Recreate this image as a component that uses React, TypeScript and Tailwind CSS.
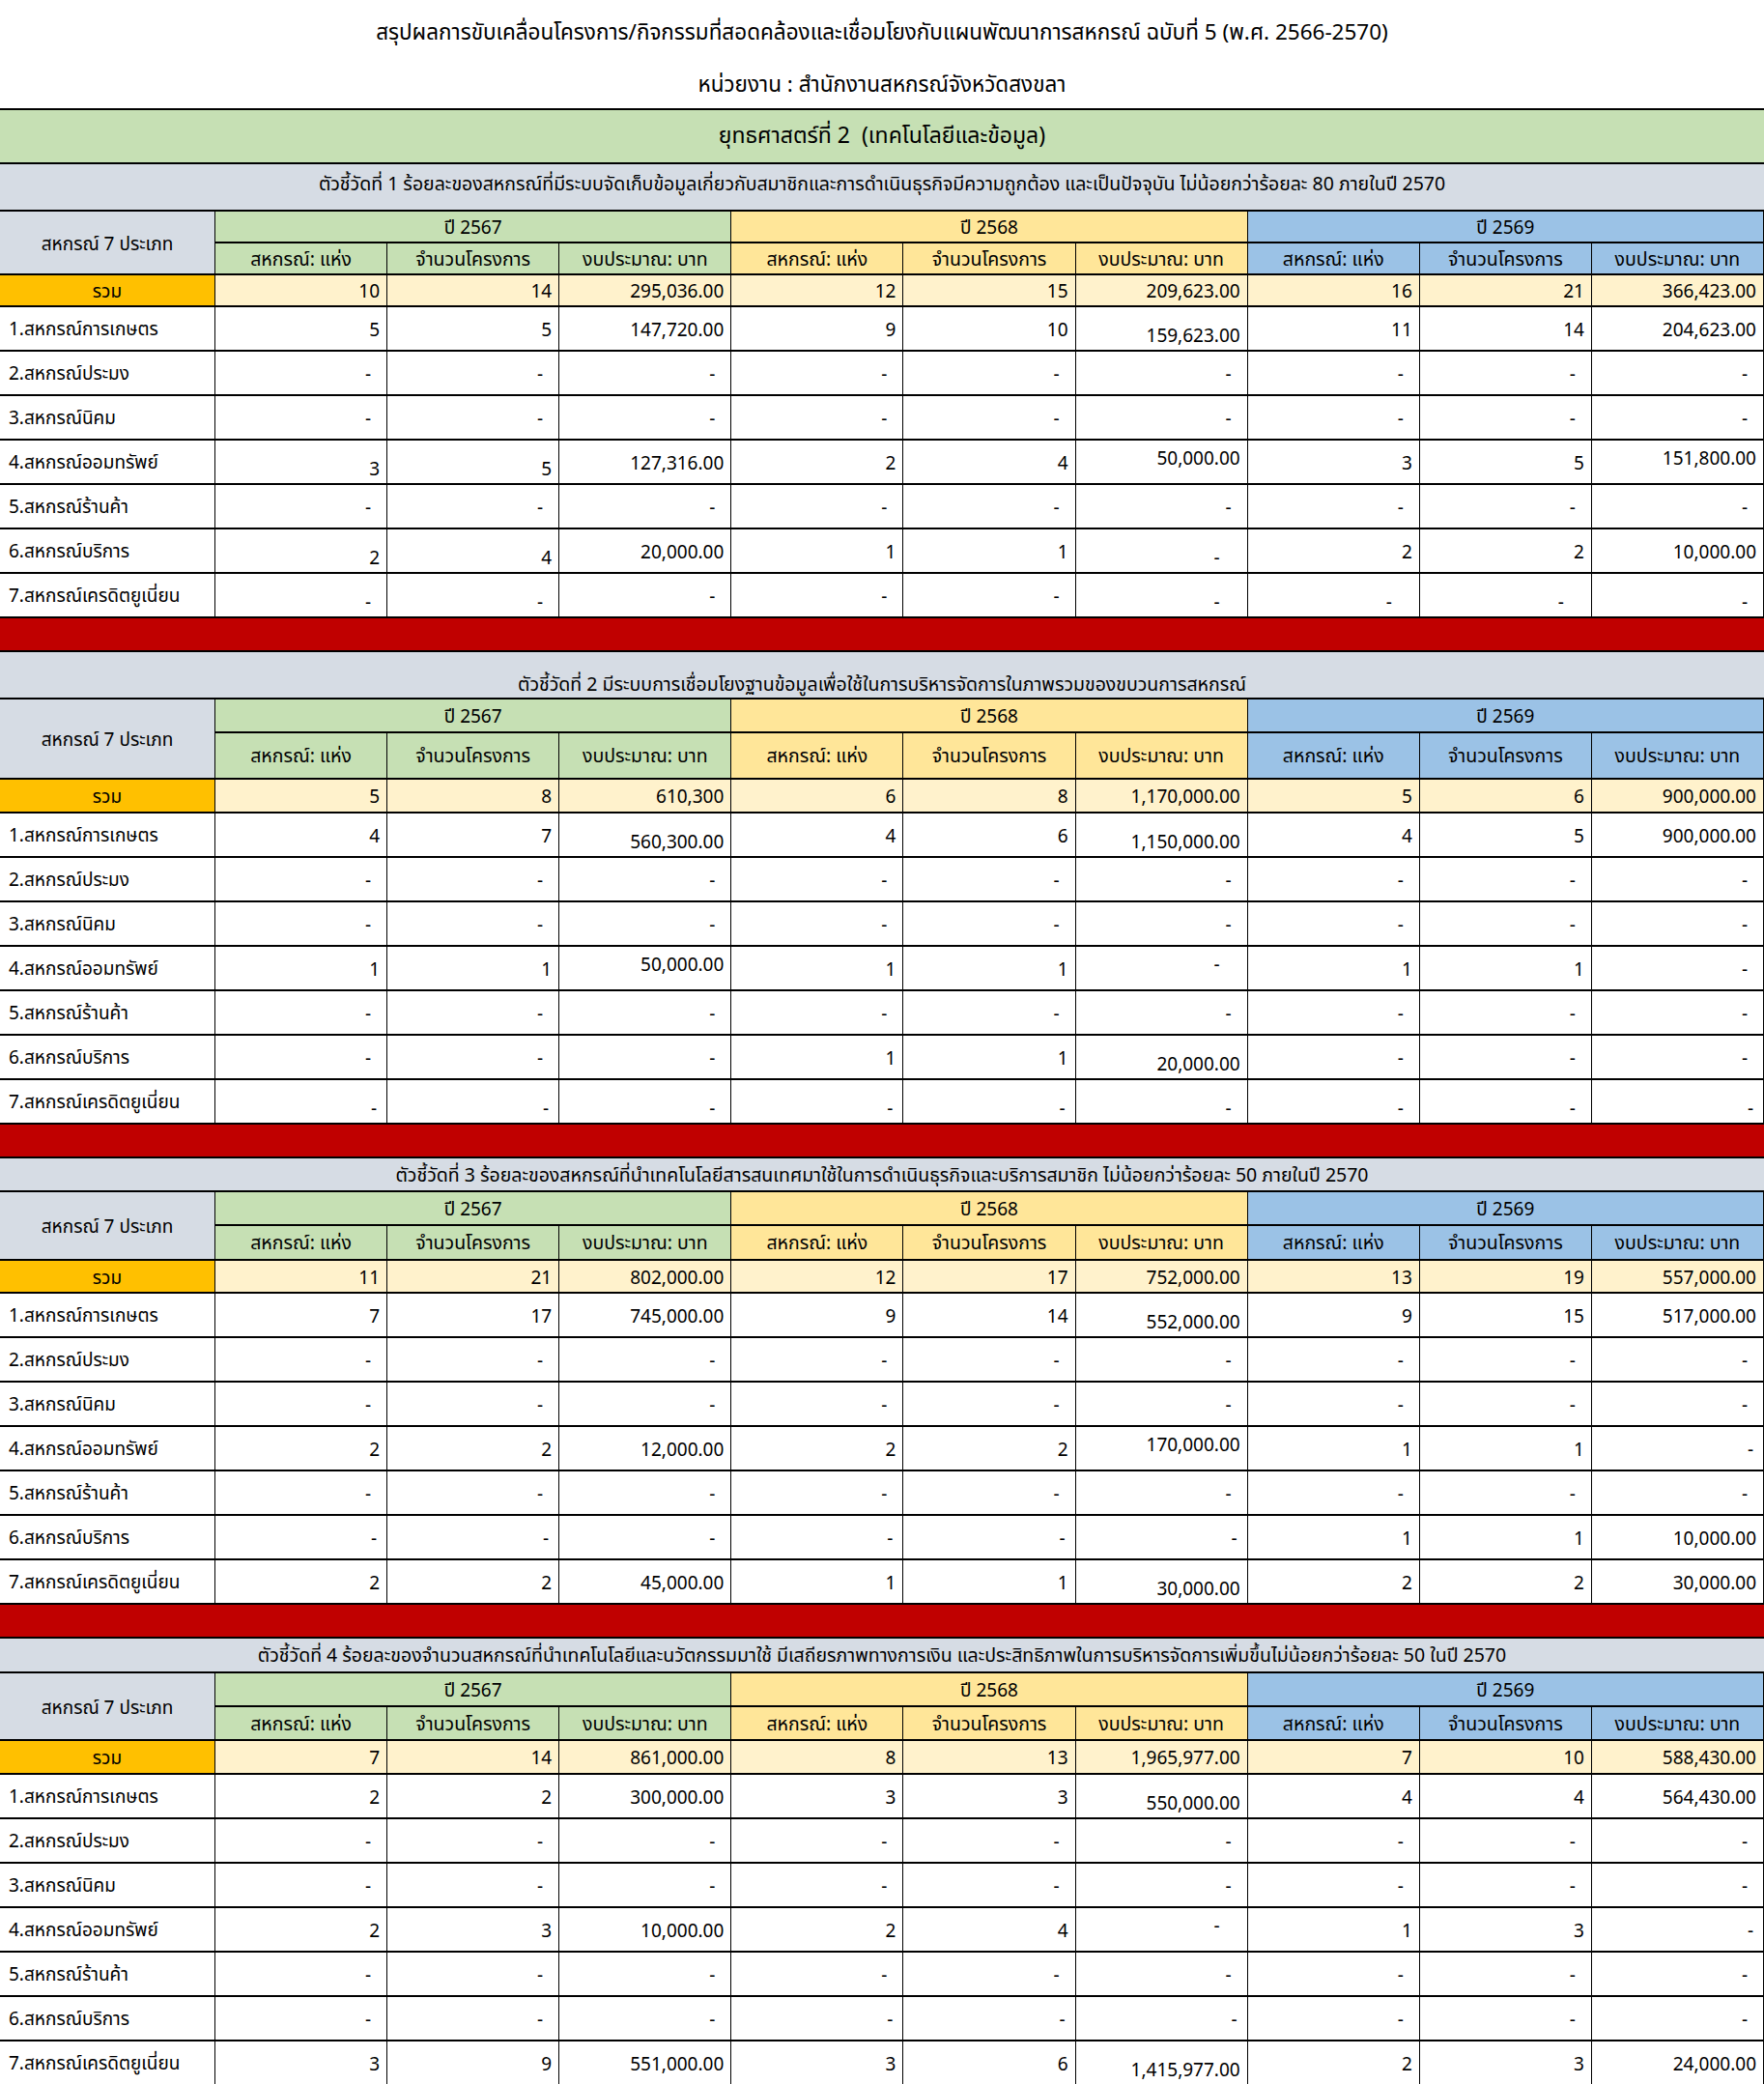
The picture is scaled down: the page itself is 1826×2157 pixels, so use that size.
import React from "react";

const LABELS = [
  "1.สหกรณ์การเกษตร",
  "2.สหกรณ์ประมง",
  "3.สหกรณ์นิคม",
  "4.สหกรณ์ออมทรัพย์",
  "5.สหกรณ์ร้านค้า",
  "6.สหกรณ์บริการ",
  "7.สหกรณ์เครดิตยูเนี่ยน",
];

const DASHES = ["-", "-", "-", "-", "-", "-", "-", "-", "-"];

// cell spec: "value mods"  b = sits lower, t = sits higher, r / o = dash nearer / further from the right edge
type Section = {
  title: string;
  titleH: string;
  titleAlign: string;
  yearH: string;
  subH: string;
  totalH: string;
  total: string[];
  rows: string[][];
};

const SECTIONS: Section[] = [
  {
    title:
      "ตัวชี้วัดที่ 1 ร้อยละของสหกรณ์ที่มีระบบจัดเก็บข้อมูลเกี่ยวกับสมาชิกและการดำเนินธุรกิจมีความถูกต้อง และเป็นปัจจุบัน ไม่น้อยกว่าร้อยละ 80 ภายในปี 2570",
    titleH: "h-[49px]",
    titleAlign: "items-center pb-[3px]",
    yearH: "h-[33px]",
    subH: "h-[33px]",
    totalH: "h-[33px]",
    total: ["10", "14", "295,036.00", "12", "15", "209,623.00", "16", "21", "366,423.00"],
    rows: [
      ["5", "5", "147,720.00", "9", "10", "159,623.00 b", "11", "14", "204,623.00"],
      DASHES,
      DASHES,
      ["3 b", "5 b", "127,316.00", "2", "4", "50,000.00 t", "3", "5", "151,800.00 t"],
      DASHES,
      ["2 b", "4 b", "20,000.00", "1", "1", "- ob", "2", "2", "10,000.00"],
      ["- b", "- b", "-", "-", "-", "- ob", "- ob", "- ob", "- b"],
    ],
  },
  {
    title:
      "ตัวชี้วัดที่ 2 มีระบบการเชื่อมโยงฐานข้อมูลเพื่อใช้ในการบริหารจัดการในภาพรวมของขบวนการสหกรณ์",
    titleH: "h-[49px]",
    titleAlign: "items-end pb-[3px]",
    yearH: "h-[35px]",
    subH: "h-[48px]",
    totalH: "h-[35px]",
    total: ["5", "8", "610,300", "6", "8", "1,170,000.00", "5", "6", "900,000.00"],
    rows: [
      ["4", "7", "560,300.00 b", "4", "6", "1,150,000.00 b", "4", "5", "900,000.00"],
      DASHES,
      DASHES,
      ["1", "1", "50,000.00 t", "1", "1", "- ot", "1", "1", "-"],
      DASHES,
      ["-", "-", "-", "1", "1", "20,000.00 b", "-", "-", "-"],
      ["- rb", "- rb", "- b", "- rb", "- rb", "- b", "- b", "- b", "- rb"],
    ],
  },
  {
    title:
      "ตัวชี้วัดที่ 3 ร้อยละของสหกรณ์ที่นำเทคโนโลยีสารสนเทศมาใช้ในการดำเนินธุรกิจและบริการสมาชิก ไม่น้อยกว่าร้อยละ 50 ภายในปี 2570",
    titleH: "h-[35px]",
    titleAlign: "items-center pt-[4px]",
    yearH: "h-[35px]",
    subH: "h-[36px]",
    totalH: "h-[34px]",
    total: ["11", "21", "802,000.00", "12", "17", "752,000.00", "13", "19", "557,000.00"],
    rows: [
      ["7", "17", "745,000.00", "9", "14", "552,000.00 b", "9", "15", "517,000.00"],
      DASHES,
      DASHES,
      ["2", "2", "12,000.00", "2", "2", "170,000.00 t", "1", "1", "- r"],
      DASHES,
      ["- r", "- r", "-", "- r", "- r", "- r", "1", "1", "10,000.00"],
      ["2", "2", "45,000.00", "1", "1", "30,000.00 b", "2", "2", "30,000.00"],
    ],
  },
  {
    title:
      "ตัวชี้วัดที่ 4 ร้อยละของจำนวนสหกรณ์ที่นำเทคโนโลยีและนวัตกรรมมาใช้ มีเสถียรภาพทางการเงิน และประสิทธิภาพในการบริหารจัดการเพิ่มขึ้นไม่น้อยกว่าร้อยละ 50 ในปี 2570",
    titleH: "h-[36px]",
    titleAlign: "items-center pt-[4px]",
    yearH: "h-[35px]",
    subH: "h-[35px]",
    totalH: "h-[35px]",
    total: ["7", "14", "861,000.00", "8", "13", "1,965,977.00", "7", "10", "588,430.00"],
    rows: [
      ["2", "2", "300,000.00", "3", "3", "550,000.00 b", "4", "4", "564,430.00"],
      DASHES,
      DASHES,
      ["2", "3", "10,000.00", "2", "4", "- ot", "1", "3", "- r"],
      DASHES,
      ["-", "-", "-", "- r", "- r", "- r", "-", "-", "-"],
      ["3", "9", "551,000.00", "3", "6", "1,415,977.00 b", "2", "3", "24,000.00"],
    ],
  },
];

const YEARS = [
  { label: "ปี 2567", bg: "bg-[#C6E0B4]" },
  { label: "ปี 2568", bg: "bg-[#FFE699]" },
  { label: "ปี 2569", bg: "bg-[#9BC2E6]" },
];

const SUBS = ["สหกรณ์: แห่ง", "จำนวนโครงการ", "งบประมาณ: บาท"];

const Val = ({ spec, bg, h }: { spec: string; bg: string; h: string }) => {
  const [v, mods = ""] = spec.split(" ");
  const dash = v === "-";
  let pr = "pr-[7px]";
  if (dash) pr = mods.includes("o") ? "pr-[28px]" : mods.includes("r") ? "pr-[10px]" : "pr-[16px]";
  const shift = mods.includes("b") ? "pt-[16px]" : mods.includes("t") ? "pb-[6px]" : "pt-[4px]";
  return (
    <div
      className={`${h} ${bg} ${pr} ${shift} flex items-center justify-end border-r border-b-2 border-black`}
    >
      {v}
    </div>
  );
};

const Block = ({ s, last }: { s: Section; last: boolean }) => (
  <>
    <div
      className={`col-span-10 ${s.titleH} ${s.titleAlign} flex justify-center bg-[#D6DCE4] border-b-2 border-black text-[19.5px]`}
    >
      {s.title}
    </div>

    <div className="row-span-2 flex items-center justify-center pt-[4px] bg-[#D6DCE4] border-r border-b-2 border-black">
      สหกรณ์ 7 ประเภท
    </div>
    {YEARS.map((y) => (
      <div
        key={y.label}
        className={`col-span-3 ${s.yearH} ${y.bg} flex items-center justify-center pt-[4px] border-r border-b-2 border-black`}
      >
        {y.label}
      </div>
    ))}
    {YEARS.map((y) =>
      SUBS.map((t) => (
        <div
          key={y.label + t}
          className={`${s.subH} ${y.bg} flex items-center justify-center pt-[4px] border-r border-b-2 border-black text-[19.5px]`}
        >
          {t}
        </div>
      ))
    )}

    <div
      className={`${s.totalH} bg-[#FFC000] flex items-center justify-center pt-[4px] border-r border-b-2 border-black`}
    >
      รวม
    </div>
    {s.total.map((v, i) => (
      <Val key={i} spec={v} bg="bg-[#FFF2CC]" h={s.totalH} />
    ))}

    {s.rows.map((r, ri) => (
      <React.Fragment key={ri}>
        <div className="h-[46px] bg-white flex items-center pl-[9px] pt-[3px] border-r border-b-2 border-black">
          {LABELS[ri]}
        </div>
        {r.map((v, ci) => (
          <Val key={ci} spec={v} bg="bg-white" h="h-[46px]" />
        ))}
      </React.Fragment>
    ))}

    {!last && <div className="col-span-10 h-[35px] bg-[#C00000] border-b-2 border-black" />}
  </>
);

export default function App() {
  return (
    <div className="w-[1826px] bg-white text-black text-[19px] leading-none font-['Noto_Sans_Thai','Noto_Sans','Liberation_Sans',sans-serif]">
      <div className="h-[112px] flex flex-col items-center text-[22.5px]">
        <div className="h-[60px] flex items-center pt-[8px]">
          สรุปผลการขับเคลื่อนโครงการ/กิจกรรมที่สอดคล้องและเชื่อมโยงกับแผนพัฒนาการสหกรณ์ ฉบับที่ 5 (พ.ศ. 2566-2570)
        </div>
        <div className="h-[52px] flex items-center pt-[4px]">หน่วยงาน : สำนักงานสหกรณ์จังหวัดสงขลา</div>
      </div>

      <div className="grid grid-cols-[223px_repeat(9,1fr)] border-t-2 border-black">
        <div className="col-span-10 h-[56px] flex items-center justify-center bg-[#C6E0B4] border-b-2 border-black text-[23px]">
          ยุทธศาสตร์ที่ 2&nbsp;&nbsp;(เทคโนโลยีและข้อมูล)
        </div>
        {SECTIONS.map((s, i) => (
          <Block key={i} s={s} last={i === SECTIONS.length - 1} />
        ))}
      </div>
    </div>
  );
}
